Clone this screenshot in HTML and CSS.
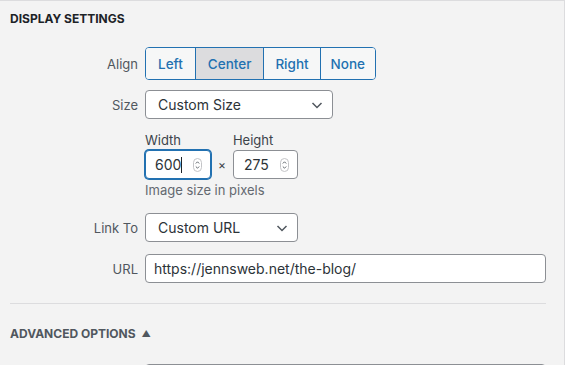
FILE: index.html
```html
<!DOCTYPE html>
<html lang="en">
<head>
  <meta charset="UTF-8" />
  <title>Display Settings</title>
  <link rel="stylesheet" href="styles.css">
</head>
<body>

<div class="panel">
  <h2 class="section-title">Display Settings</h2>

  <div class="form">
    <div class="row">
      <span class="label">Align</span>
      <div class="btn-group">
        <button class="btn">Left</button>
        <button class="btn active">Center</button>
        <button class="btn">Right</button>
        <button class="btn">None</button>
      </div>
    </div>

    <div class="row">
      <span class="label">Size</span>
      <div class="select size-select">
        Custom Size
        <svg class="chevron" width="14" height="14" viewBox="0 0 14 14"><path d="M2.5 5 L7 9.5 L11.5 5" fill="none" stroke="#50575e" stroke-width="1.5"/></svg>
      </div>
    </div>

    <div class="row custom-size">
      <span class="label"></span>
      <div class="dims">
        <div class="dim-fields">
          <div class="dim">
            <span class="dim-label">Width</span>
            <div class="num-input focused">
              <span>600<i class="caret"></i></span>
              <svg class="spin" width="9" height="14" viewBox="0 0 9 14"><rect x="0.5" y="0.5" width="8" height="13" rx="4" fill="#fff" stroke="#c3c4c7"/><path d="M2.8 5.5 L4.5 3.8 L6.2 5.5 M2.8 8.5 L4.5 10.2 L6.2 8.5" fill="none" stroke="#50575e" stroke-width="0.9"/></svg>
            </div>
          </div>
          <span class="times">×</span>
          <div class="dim">
            <span class="dim-label">Height</span>
            <div class="num-input">
              <span>275</span>
              <svg class="spin" width="9" height="14" viewBox="0 0 9 14"><rect x="0.5" y="0.5" width="8" height="13" rx="4" fill="#fff" stroke="#c3c4c7"/><path d="M2.8 5.5 L4.5 3.8 L6.2 5.5 M2.8 8.5 L4.5 10.2 L6.2 8.5" fill="none" stroke="#50575e" stroke-width="0.9"/></svg>
            </div>
          </div>
        </div>
        <p class="help">Image size in pixels</p>
      </div>
    </div>

    <div class="row">
      <span class="label">Link To</span>
      <div class="select link-select">
        Custom URL
        <svg class="chevron" width="14" height="14" viewBox="0 0 14 14"><path d="M2.5 5 L7 9.5 L11.5 5" fill="none" stroke="#50575e" stroke-width="1.5"/></svg>
      </div>
    </div>

    <div class="row url-row">
      <span class="label">URL</span>
      <div class="text-input">https://jennsweb.net/the-blog/</div>
    </div>
  </div>

  <hr class="divider">

  <h2 class="section-title advanced">Advanced Options <span class="arrow">▲</span></h2>

  <div class="form more">
    <div class="row">
      <span class="label"></span>
      <div class="text-input"></div>
    </div>
  </div>
</div>

</body>
</html>
```

FILE: styles.css
```css
* {
  box-sizing: border-box;
}

body {
  margin: 0;
  background: #fff;
  font-family: 'Inter', 'Noto Sans', sans-serif;
  color: #2c3338;
  overflow: hidden;
}

.panel {
  width: 565px;
  height: 100vh;
  overflow: hidden;
  background: #f3f3f3;
  border-top: 1px solid #dcdcde;
  border-right: 1px solid #dcdcde;
  padding: 10px 18px 0 10px;
}

.section-title {
  margin: 0;
  font-size: 12px;
  font-weight: 700;
  text-transform: uppercase;
  color: #1d2327;
  line-height: 16px;
}

.form {
  display: flex;
  flex-direction: column;
  gap: 10px;
  margin-top: 20px;
}

.row {
  display: flex;
  align-items: center;
  gap: 7px;
}

.label {
  width: 128px;
  flex: none;
  text-align: right;
  font-size: 13px;
  color: #50575e;
}

.btn-group {
  display: flex;
  border: 1px solid #2271b1;
  border-radius: 4px;
  overflow: hidden;
  background: #f6f7f7;
}

.btn {
  font-family: inherit;
  font-size: 13.5px;
  font-weight: 500;
  color: #2271b1;
  background: #f6f7f7;
  border: none;
  border-left: 1px solid #2271b1;
  height: 31px;
  padding: 0 11px;
}
.btn:first-child {
  border-left: none;
  padding: 0 12px;
}
.btn.active {
  background: #dcdcde;
  padding: 0 12px;
}
.btn:last-child {
  padding: 0 10px;
}

.select {
  position: relative;
  height: 29px;
  border: 1px solid #8c8f94;
  border-radius: 4px;
  background: #fff;
  font-size: 14px;
  color: #2c3338;
  padding: 0 12px;
  display: flex;
  align-items: center;
}
.size-select { width: 188px; }
.link-select { width: 153px; }

.chevron {
  position: absolute;
  right: 8px;
  top: 7px;
}

.custom-size {
  align-items: flex-start;
  margin-top: 3px;
  margin-bottom: 5px;
}

.dim-fields {
  display: flex;
  align-items: flex-end;
  gap: 7px;
}

.dim {
  display: flex;
  flex-direction: column;
  gap: 2px;
}

.dim-label {
  font-size: 13px;
  color: #3c434a;
  line-height: 16px;
}

.num-input {
  width: 65px;
  height: 29px;
  border: 1px solid #8c8f94;
  border-radius: 4px;
  background: #fff;
  font-size: 14px;
  padding: 0 8px 0 10px;
  display: flex;
  align-items: center;
  justify-content: space-between;
}
.num-input.focused {
  width: 66px;
  border-color: #2271b1;
  box-shadow: 0 0 0 1px #2271b1;
  padding-left: 9px;
}

.caret {
  display: inline-block;
  width: 1px;
  height: 16px;
  background: #1d2327;
  vertical-align: -3px;
}

.times {
  font-size: 12px;
  color: #3c434a;
  padding-bottom: 7px;
}

.help {
  margin: 3px 0 0;
  font-size: 13px;
  color: #646970;
}

.url-row {
  margin-top: 2px;
}

.text-input {
  flex: 1;
  height: 29px;
  border: 1px solid #8c8f94;
  border-radius: 4px;
  background: #fff;
  font-size: 14px;
  padding: 0 8px;
  display: flex;
  align-items: center;
}

.divider {
  border: none;
  border-top: 1px solid #dcdcde;
  margin: 20px 0 0;
}

.advanced {
  color: #50575e;
  margin-top: 22px;
}

.arrow {
  font-size: 9px;
  margin-left: 3px;
  vertical-align: 1px;
}

.form.more {
  margin-top: 22px;
}
```
